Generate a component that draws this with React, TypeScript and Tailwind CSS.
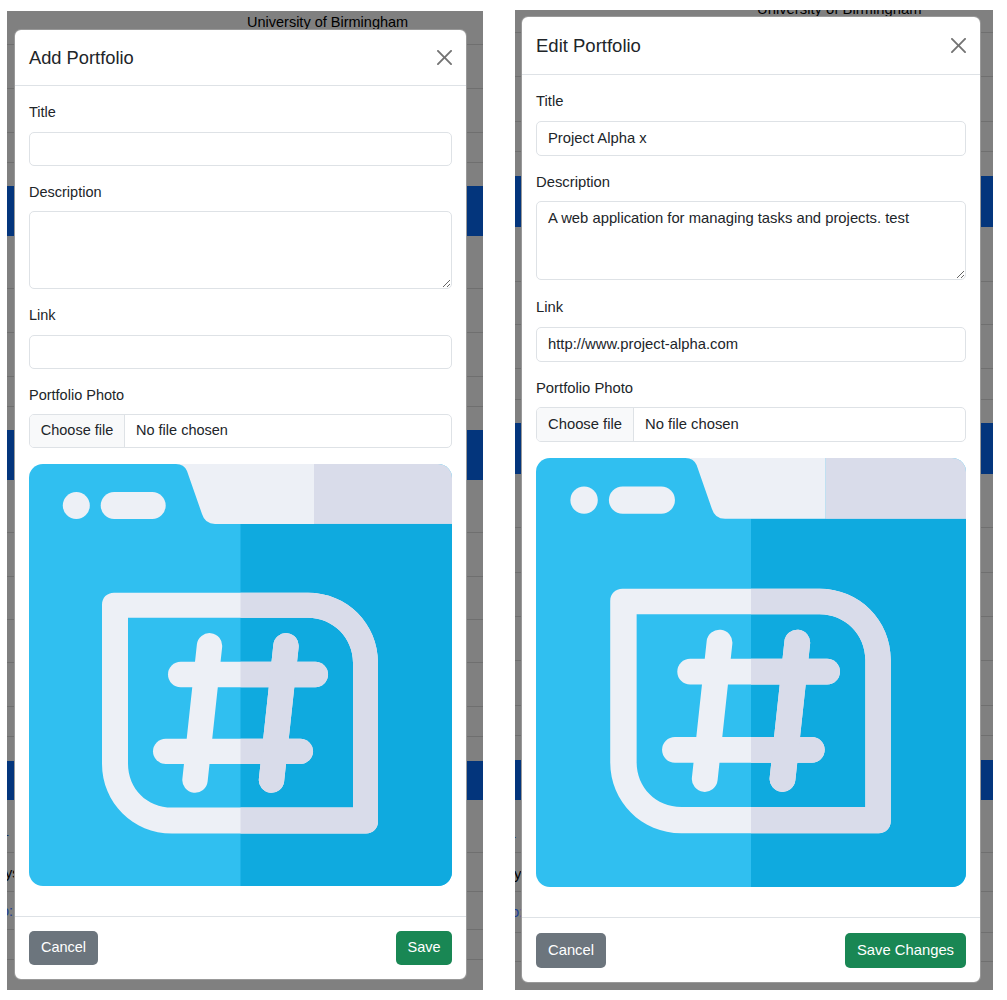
const leftRows = [
  { end: 45, text: "University of Birmingham", textClass: "pl-[240px] pt-[1px] text-[14.5px] text-black" },
  { end: 89 },
  { end: 133 },
  { end: 163 },
  { end: 186, noLine: true },
  { end: 236, blue: true },
  { end: 289 },
  { end: 333 },
  { end: 377 },
  { end: 407 },
  { end: 430, noLine: true },
  { end: 480, blue: true },
  { end: 533 },
  { end: 577 },
  { end: 620 },
  { end: 663 },
  { end: 707 },
  { end: 737 },
  { end: 761, noLine: true },
  { end: 800, blue: true },
  { end: 853, text: "1", textClass: "pt-[21px] -ml-[6px] text-[14.5px] text-[#0a2a66]" },
  { end: 892, text: "ys:", textClass: "pt-[10px] -ml-[2px] text-[14.5px] text-black" },
  { end: 930, text: "o:", textClass: "pt-[9px] -ml-[6px] text-[14.5px] text-[#1c3f94]" },
  { end: 960 },
  { end: 990, noLine: true },
];

const rightRows = [
  { end: 33, text: "University of Birmingham", textClass: "pl-[242px] -mt-[12px] text-[14.8px] text-black" },
  { end: 77 },
  { end: 122 },
  { end: 152 },
  { end: 176, noLine: true },
  { end: 227, blue: true },
  { end: 282 },
  { end: 325 },
  { end: 369 },
  { end: 400 },
  { end: 423, noLine: true },
  { end: 474, blue: true },
  { end: 528 },
  { end: 573 },
  { end: 617 },
  { end: 661 },
  { end: 706 },
  { end: 736 },
  { end: 760, noLine: true },
  { end: 800, blue: true },
  { end: 853, text: "1", textClass: "pt-[22px] -ml-[7px] text-[14.8px] text-[#0a2a66]" },
  { end: 892, text: "ys:", textClass: "pt-[10px] -ml-[1px] text-[14.8px] text-black" },
  { end: 933, text: "o:", textClass: "pt-[9px] -ml-[4px] text-[14.8px] text-[#1c3f94]" },
  { end: 962 },
  { end: 990, noLine: true },
];

type Row = {
  end: number;
  blue?: boolean;
  noLine?: boolean;
  text?: string;
  textClass?: string;
};

function PageBehind({ rows, top }: { rows: Row[]; top: number }) {
  let prev = top;
  return (
    <div className="absolute inset-0">
      {rows.map((row) => {
        const height = row.end - prev;
        prev = row.end;
        return (
          <div
            key={row.end}
            style={{ height }}
            className={`flow-root whitespace-nowrap ${row.blue ? "bg-[#03357c]" : ""} ${
              row.noLine || row.blue ? "" : "border-b border-[#6f6f6f]"
            }`}
          >
            {row.text && <div className={row.textClass}>{row.text}</div>}
          </div>
        );
      })}
    </div>
  );
}

function Shapes({ color }: { color: string }) {
  return (
    <>
      <path
        fillRule="evenodd"
        fill={color}
        d="M85 129H279C318 129 349 160 349 199V358C349 365 344 370 337 370H143C104 370 73 339 73 300V141C73 134 78 129 85 129ZM99 154V300C99 325 118 344 143 344H324V199C324 174 304 154 279 154Z"
      />
      <rect x="139" y="198" width="160" height="25.4" rx="12.7" fill={color} />
      <rect x="124" y="275" width="160" height="25.4" rx="12.7" fill={color} />
      <path d="M180.5 182L166 316.5" stroke={color} strokeWidth="25.4" strokeLinecap="round" fill="none" />
      <path d="M257 182L242.5 316.5" stroke={color} strokeWidth="25.4" strokeLinecap="round" fill="none" />
    </>
  );
}

function FolderPicture({ clipId, className }: { clipId: string; className: string }) {
  return (
    <svg viewBox="0 0 423 423" preserveAspectRatio="none" className={`block rounded-[14px] ${className}`}>
      <rect width="423" height="423" fill="#30bff0" />
      <rect x="211.5" y="60" width="211.5" height="363" fill="#0faadf" />
      <path d="M147 0Q155 0 158 7L173 50Q176 60 186 60H285V0Z" fill="#edf0f6" />
      <rect x="285" width="138" height="60" fill="#d9dcea" />
      <circle cx="47.3" cy="41.5" r="13.5" fill="#edf0f6" />
      <rect x="71.7" y="28" width="65" height="27" rx="13.5" fill="#edf0f6" />
      <clipPath id={clipId}>
        <rect x="211.5" width="211.5" height="423" />
      </clipPath>
      <Shapes color="#edf0f6" />
      <g clipPath={`url(#${clipId})`}>
        <Shapes color="#d9dcea" />
      </g>
    </svg>
  );
}

function CloseIcon({ className }: { className: string }) {
  return (
    <svg viewBox="0 0 16 16" className={className} fill="#000" fillOpacity="0.55">
      <path d="M.293.293a1 1 0 0 1 1.414 0L8 6.586 14.293.293a1 1 0 1 1 1.414 1.414L9.414 8l6.293 6.293a1 1 0 0 1-1.414 1.414L8 9.414l-6.293 6.293a1 1 0 0 1-1.414-1.414L6.586 8 .293 1.707a1 1 0 0 1 0-1.414z" />
    </svg>
  );
}

export default function App() {
  const inputLeft =
    "block h-[34px] w-full rounded-[5px] border border-[#dee2e6] bg-white px-[11px] text-[14.5px] text-[#212529] outline-none";
  const inputRight =
    "block h-[34.5px] w-full rounded-[5px] border border-[#dee2e6] bg-white px-[11px] text-[14.8px] text-[#212529] outline-none";
  const labelLeft = "mb-[8px] block h-[22.5px] text-[14.5px] leading-[22px] text-[#212529]";
  const labelRight = "block h-[22.5px] text-[14.8px] leading-[22px] text-[#212529]";

  return (
    <div className="flex h-[1000px] items-start gap-[32px] bg-white pl-[7px] font-['Liberation_Sans',Arial,sans-serif]">
      {/* Add Portfolio */}
      <div className="relative mt-[11px] h-[979px] w-[476px] overflow-hidden bg-[#808080]">
        <PageBehind rows={leftRows} top={11} />
        <div className="relative ml-[7px] mt-[18px] w-[453px] rounded-[7px] border border-black/40 bg-white">
          <div className="flex h-[56px] items-center justify-between border-b border-[#dee2e6] px-[14px]">
            <h5 className="text-[18.3px] text-[#212529]">Add Portfolio</h5>
            <CloseIcon className="h-[15px] w-[15px]" />
          </div>
          <div className="px-[14px] pb-[30px] pt-[15px]">
            <label className={labelLeft}>Title</label>
            <input className={inputLeft} readOnly />
            <label className={`${labelLeft} mt-[15px]`}>Description</label>
            <textarea className={`${inputLeft} h-[78px] resize-y`} readOnly />
            <label className={`${labelLeft} mt-[15px]`}>Link</label>
            <input className={inputLeft} readOnly />
            <label className={`${labelLeft} mt-[15px]`}>Portfolio Photo</label>
            <div className="flex h-[34px] items-stretch overflow-hidden rounded-[5px] border border-[#dee2e6] text-[14.5px] text-[#212529]">
              <div className="flex w-[95px] items-center justify-center border-r border-[#dee2e6] bg-[#f8f9fa]">Choose file</div>
              <div className="flex items-center pl-[11px]">No file chosen</div>
            </div>
            <FolderPicture clipId="clip-add" className="mt-[15.5px] h-[422.5px] w-[423px]" />
          </div>
          <div className="flex justify-between border-t border-[#dee2e6] px-[14px] pb-[14px] pt-[14px]">
            <button className="h-[34px] w-[69px] rounded-[5px] bg-[#6c757d] text-[14.5px] text-white">Cancel</button>
            <button className="h-[34px] w-[56px] rounded-[5px] bg-[#198754] text-[14.5px] text-white">Save</button>
          </div>
        </div>
      </div>

      {/* Edit Portfolio */}
      <div className="relative mt-[10px] h-[980px] w-[478px] overflow-hidden bg-[#808080]">
        <PageBehind rows={rightRows} top={10} />
        <div className="relative ml-[6px] mt-[6px] w-[460px] rounded-[7px] border border-black/40 bg-white">
          <div className="flex h-[58px] items-center justify-between border-b border-[#dee2e6] px-[14px]">
            <h5 className="text-[18.5px] text-[#212529]">Edit Portfolio</h5>
            <CloseIcon className="h-[15px] w-[15px]" />
          </div>
          <div className="px-[14px] pb-[30px] pt-[15px]">
            <label className={`${labelRight} mb-[8.5px]`}>Title</label>
            <input className={inputRight} value="Project Alpha x" readOnly />
            <label className={`${labelRight} mb-[7.5px] mt-[15.5px]`}>Description</label>
            <textarea
              className={`${inputRight} h-[79px] resize-y py-[5px] leading-[22px]`}
              value="A web application for managing tasks and projects. test"
              readOnly
            />
            <label className={`${labelRight} mb-[8.5px] mt-[16px]`}>Link</label>
            <input className={inputRight} value="http://www.project-alpha.com" readOnly />
            <label className={`${labelRight} mb-[7.5px] mt-[15.5px]`}>Portfolio Photo</label>
            <div className="flex h-[34.5px] items-stretch overflow-hidden rounded-[5px] border border-[#dee2e6] text-[14.8px] text-[#212529]">
              <div className="flex w-[97px] items-center justify-center border-r border-[#dee2e6] bg-[#f8f9fa]">Choose file</div>
              <div className="flex items-center pl-[11px]">No file chosen</div>
            </div>
            <FolderPicture clipId="clip-edit" className="mt-[16.5px] h-[429px] w-[430px]" />
          </div>
          <div className="flex justify-between border-t border-[#dee2e6] px-[14px] pb-[14px] pt-[15px]">
            <button className="h-[35px] w-[70px] rounded-[5px] bg-[#6c757d] text-[14.8px] text-white">Cancel</button>
            <button className="h-[35px] w-[121px] rounded-[5px] bg-[#198754] text-[14.8px] text-white">Save Changes</button>
          </div>
        </div>
      </div>
    </div>
  );
}
